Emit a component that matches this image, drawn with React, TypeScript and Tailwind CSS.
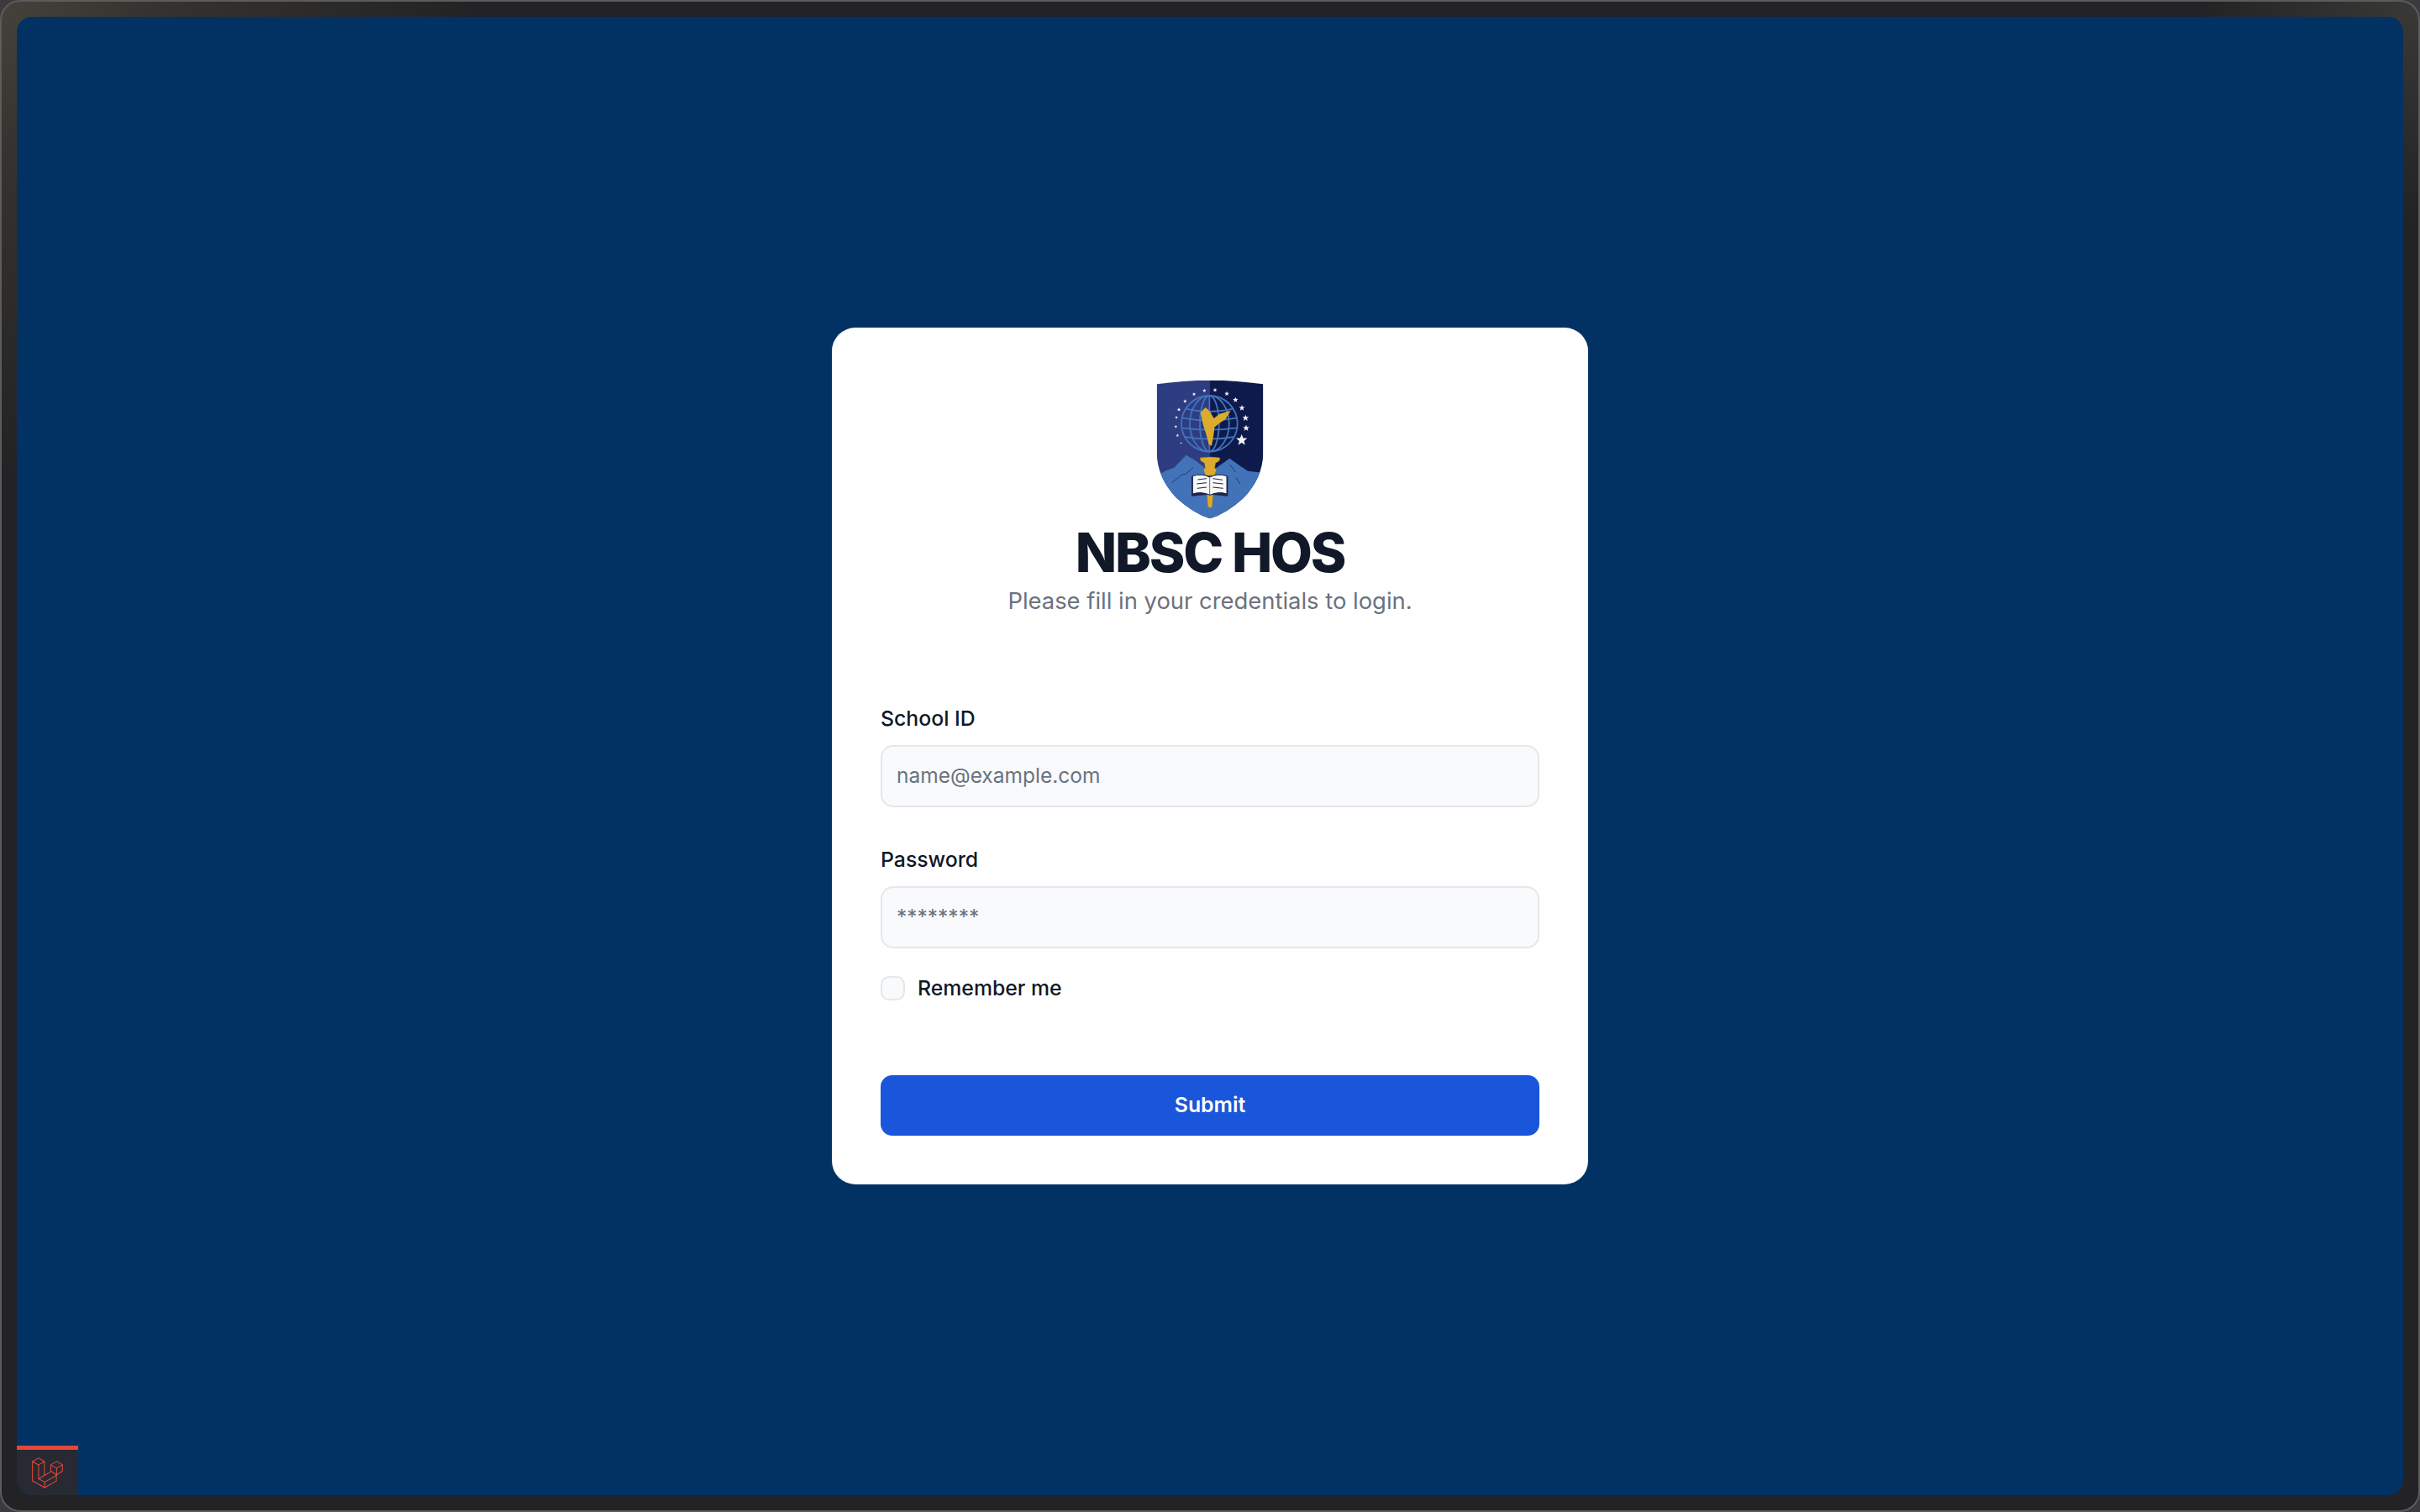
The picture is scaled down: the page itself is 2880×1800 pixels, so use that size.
const SMALL_STARS = [
  [318, 105, 8], [280, 107, 7], [243, 120, 7], [211, 145, 7], [189, 175, 7],
  [180, 203, 6], [178, 236, 6], [184, 267, 6], [197, 294, 4],
  [360, 118, 9], [391, 140, 10], [414, 169, 11], [427, 205, 12], [429, 241, 12], [413, 284, 21],
]

function starPoints(cx: number, cy: number, r: number) {
  const pts: string[] = []
  for (let i = 0; i < 10; i++) {
    const rad = i % 2 === 0 ? r : r * 0.42
    const a = -Math.PI / 2 + (i * Math.PI) / 5
    pts.push(`${cx + rad * Math.cos(a)},${cy + rad * Math.sin(a)}`)
  }
  return pts.join(" ")
}

const SHIELD = "M110 84 Q300 56 490 84 L490 330 Q488 420 420 490 Q360 545 300 564 Q240 545 180 490 Q112 420 110 330 Z"

function Crest() {
  return (
    <svg viewBox="108 62 384 504" className="w-[128px] h-[168px]">
      <defs>
        <clipPath id="shield">
          <path d={SHIELD} />
        </clipPath>
      </defs>
      <g clipPath="url(#shield)">
        <rect x="100" y="50" width="200" height="520" fill="#2e3d81" />
        <rect x="300" y="50" width="200" height="520" fill="#0e1a4c" />
        <path
          d="M100 420 L138 395 L172 382 L215 337 L250 358 L275 378 L300 400 L330 378 L370 349 L410 378 L435 394 L500 402 L500 570 L100 570 Z"
          fill="#4273b9"
        />
        <path d="M163 437 L198 408 L215 404 L240 382" fill="none" stroke="#1d2c66" strokeWidth="2.5" />
        <path d="M392 418 L408 440 M370 370 L392 398" fill="none" stroke="#1d2c66" strokeWidth="2.5" />
      </g>
      <g fill="none" stroke="#4172bc" strokeWidth="5.5">
        <circle cx="298" cy="225" r="100" />
        <ellipse cx="298" cy="225" rx="34" ry="100" />
        <ellipse cx="298" cy="225" rx="70" ry="100" />
        <path d="M298 125 V325" />
        <path d="M213 172 Q298 192 383 172" />
        <path d="M200 205 Q298 222 396 205" />
        <path d="M199 240 Q298 254 397 240" />
        <path d="M208 272 Q298 288 388 272" />
      </g>
      <path
        d="M266 186 L284 167 L300 182 L314 206 L334 190 L374 178 L356 208 L330 226 L316 238 L313 264 L306 304 L296 300 L286 262 L275 228 L270 205 Z"
        fill="#ddab2b"
      />
      {SMALL_STARS.map(([x, y, r]) => (
        <polygon key={`${x}-${y}`} points={starPoints(x, y, r)} fill="#f2f3f7" />
      ))}
      <path
        d="M264 347 Q300 341 336 347 L333 358 L320 366 L317 382 L323 390 L316 410 L284 410 L277 390 L283 382 L280 366 L267 358 Z"
        fill="#dcaa2e"
        stroke="#8d6a1c"
        strokeWidth="1.5"
      />
      <path d="M289 478 L311 478 L308 520 Q300 532 292 520 Z" fill="#dcaa2e" stroke="#8d6a1c" strokeWidth="1.5" />
      <path d="M234 412 L234 484 L298 478 L302 478 L364 484 L364 412 Z" fill="#1a2550" />
      <path d="M238 412 Q270 402 298 416 Q330 402 360 412 L360 476 Q330 466 300 480 Q270 466 238 476 Z" fill="#f8f8f6" stroke="#1a2550" strokeWidth="3" />
      <path
        d="M256 425 L288 421 M252 440 L288 436 M254 456 L288 452 M310 421 L345 426 M310 436 L347 440 M310 452 L347 456"
        fill="none"
        stroke="#1a2550"
        strokeWidth="3"
      />
      <path d="M299 416 V480" stroke="#1a2550" strokeWidth="2" />
    </svg>
  )
}

function LaravelMark() {
  return (
    <svg viewBox="115 160 118 118" className="w-[39px] h-[39px]" fill="none" stroke="#e3483b" strokeWidth="3.2" strokeLinejoin="round" strokeLinecap="round">
      <path d="M120 178 L142 165 L163 178 L142 190 Z" />
      <path d="M120 178 V248 L164 272 L206 248 V226" />
      <path d="M142 190 V240 L164 252 L206 228" />
      <path d="M163 178 V228 L142 240" />
      <path d="M164 252 V272" />
      <path d="M163 228 L186 214" />
      <path d="M186 190 L207 177 L228 190 L207 202 Z" />
      <path d="M186 190 V212 L207 226 L228 212 V190" />
      <path d="M207 202 V226" />
    </svg>
  )
}

function Field({ label, type, placeholder }: { label: string; type: string; placeholder: string }) {
  return (
    <div>
      <label className="block mb-[14px] text-[24.8px] leading-[36px] font-medium text-[#111827]">{label}</label>
      <input
        type={type}
        placeholder={placeholder}
        className="block w-full h-[74px] pl-[17px] pr-[18px] pb-[2px] rounded-[15px] border-2 border-[#e5e7eb] bg-[#f9fafb] text-[24.5px] outline-none placeholder:text-[#6b7280]"
      />
    </div>
  )
}

export default function App() {
  return (
    <div className="w-screen h-screen overflow-hidden bg-[#3a3a3f] font-['Inter',sans-serif]">
      <div className="w-full h-full p-[18px] rounded-[24px] border-2 border-[#5c5c5c] bg-[#232325] bg-[radial-gradient(circle_at_0_0,#45423b_0,#35332f_180px,transparent_560px),radial-gradient(circle_at_100%_0,#3a3937_0,transparent_260px)]">
        <main className="relative w-full h-full rounded-[18px] overflow-hidden bg-[#023264] flex items-center justify-center">
          <div className="w-[900px] h-[1020px] bg-white rounded-[28px] p-[58px] flex flex-col">
            <div className="flex flex-col items-center">
              <div className="mt-[2px]">
                <Crest />
              </div>
              <h1 className="mt-[7px] text-[64.6px] leading-[66px] font-extrabold tracking-[-2.2px] text-[#111827]">NBSC HOS</h1>
              <p className="mt-[4px] text-[27.4px] leading-[40px] text-[#6b7280]">Please fill in your credentials to login.</p>
            </div>
            <form className="mt-[102px] flex flex-col grow">
              <Field label="School ID" type="text" placeholder="name@example.com" />
              <div className="mt-[44px]">
                <Field label="Password" type="password" placeholder="********" />
              </div>
              <label className="mt-[32px] flex items-center gap-[15px] text-[24.8px] leading-[30px] font-medium text-[#111827]">
                <input type="checkbox" className="appearance-none w-[29px] h-[29px] rounded-[10px] border-2 border-[#e5e7eb] bg-[#f9fafb]" />
                Remember me
              </label>
              <button type="button" className="mt-auto h-[72px] w-full rounded-[14px] bg-[#1a56db] text-white text-[24.8px] font-semibold">
                Submit
              </button>
            </form>
          </div>
          <div className="absolute left-0 bottom-0 w-[73px] h-[59px] border-t-[5px] border-[#e3483b] bg-[#272a33] rounded-bl-[18px] flex items-center justify-center">
            <LaravelMark />
          </div>
        </main>
      </div>
    </div>
  )
}
